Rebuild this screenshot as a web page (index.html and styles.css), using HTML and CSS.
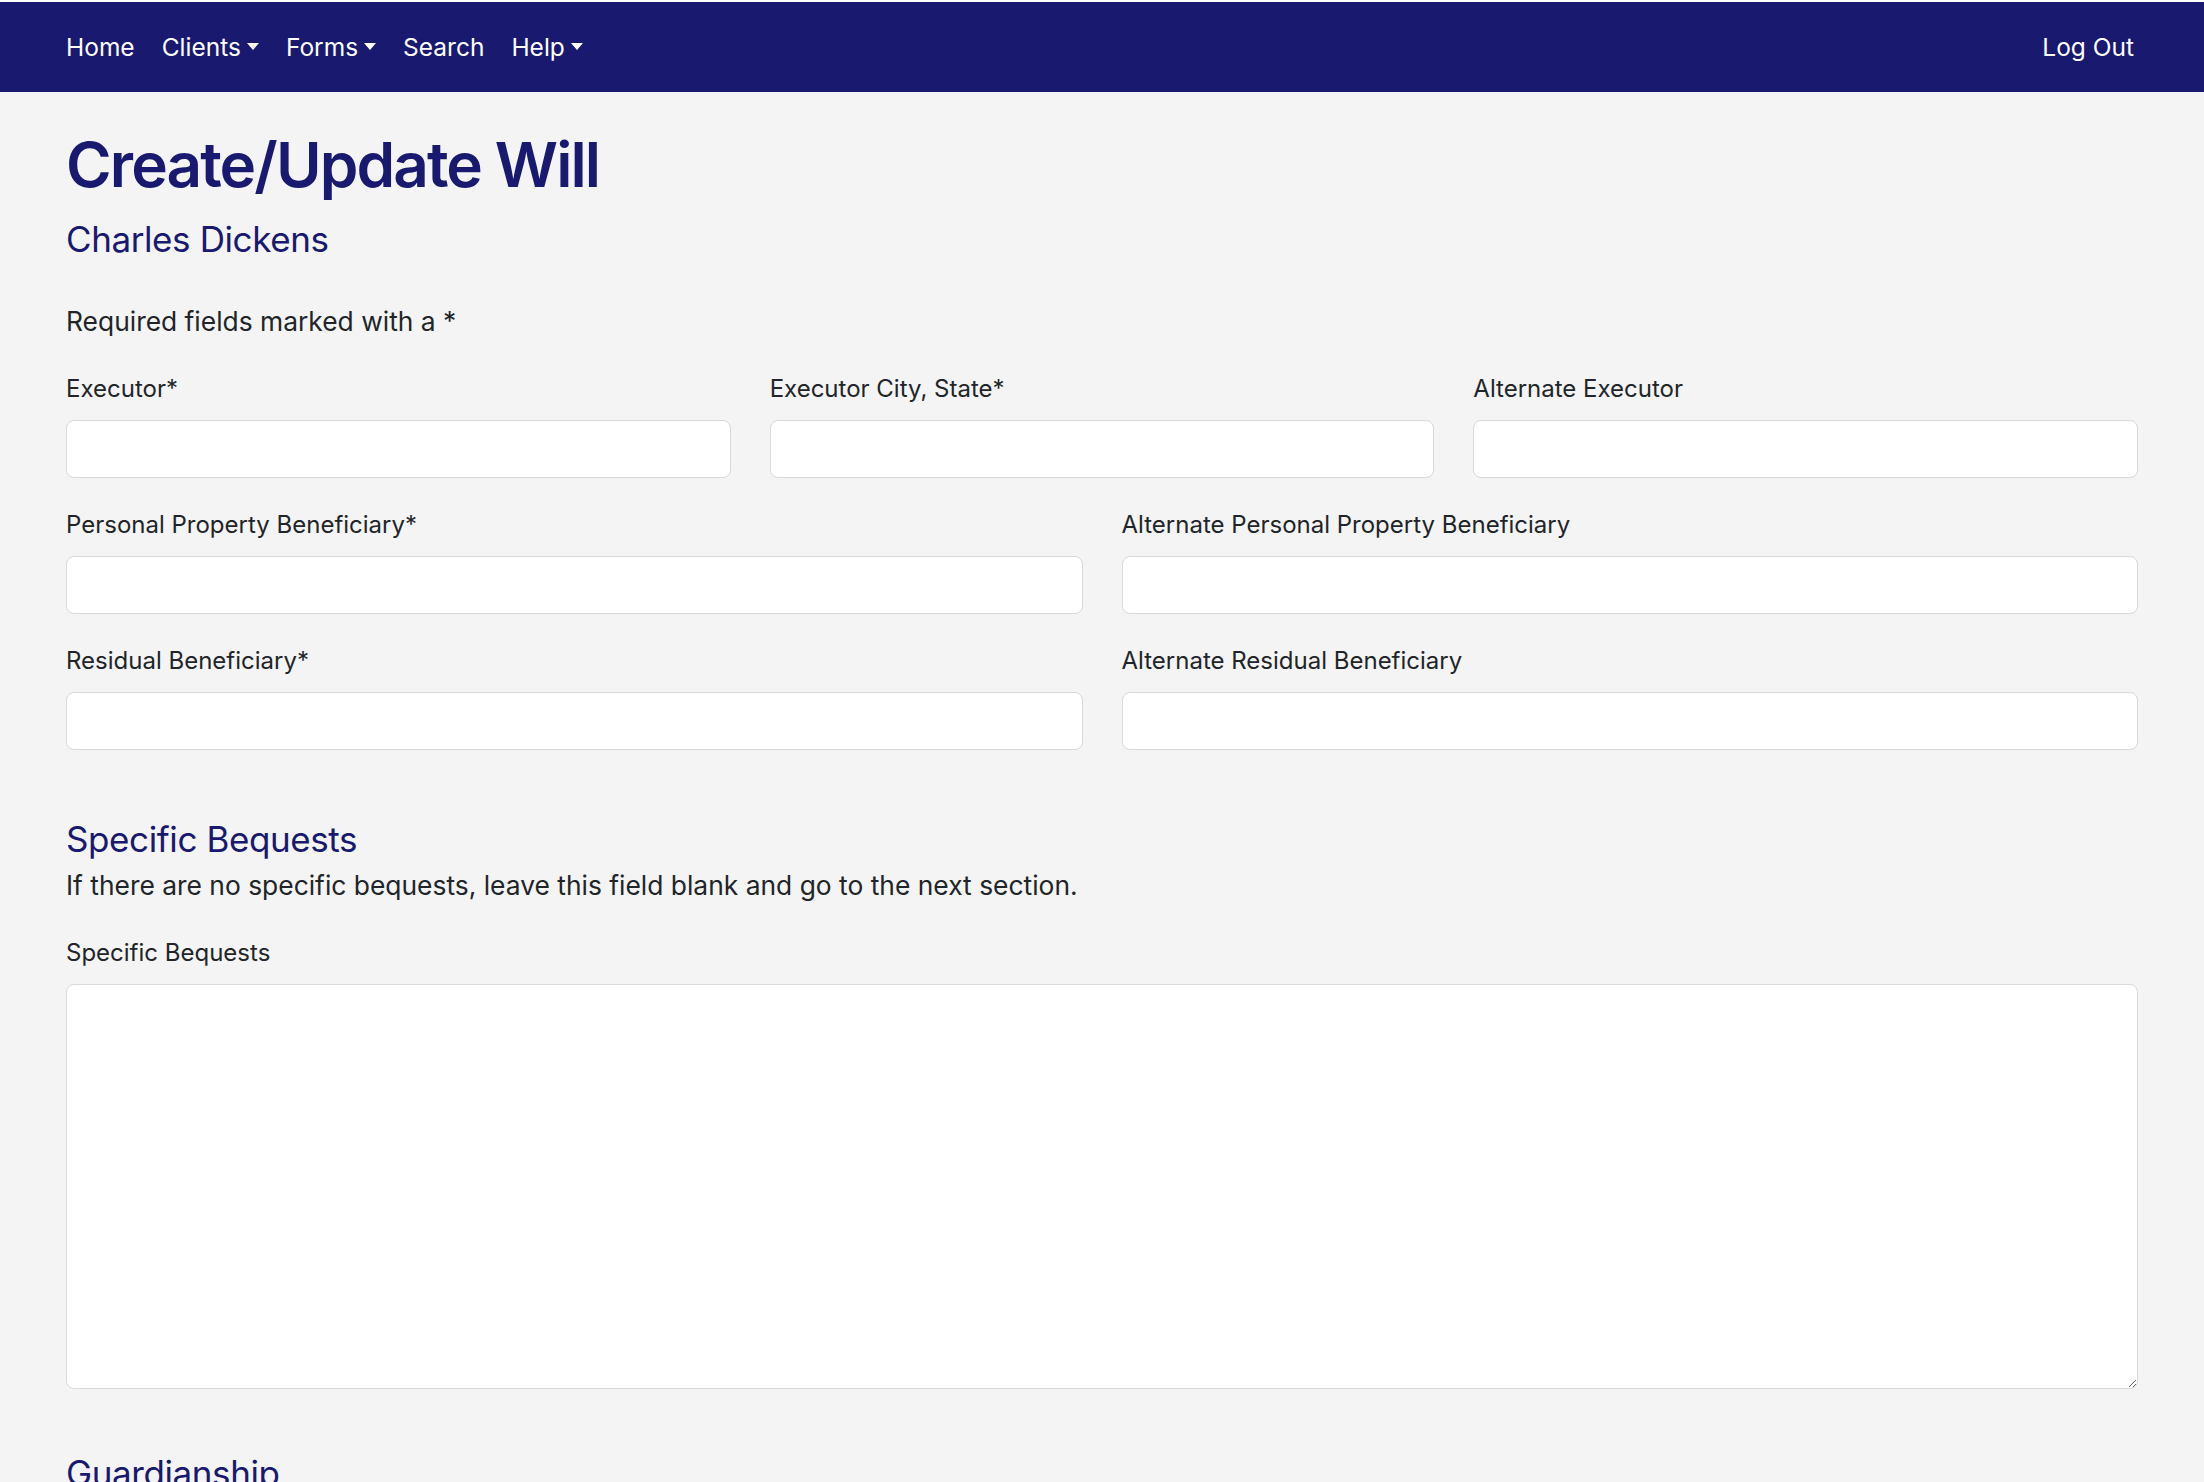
FILE: index.html
```html
<!DOCTYPE html>
<html lang="en">
<head>
  <meta charset="UTF-8" />
  <meta name="viewport" content="width=device-width, initial-scale=1.0">
  <title>Create/Update Will</title>
  <link rel="stylesheet" href="styles.css">
</head>
<body>
  <nav class="navbar">
    <ul class="nav-links">
      <li><a href="#">Home</a></li>
      <li><a href="#" class="dropdown">Clients</a></li>
      <li><a href="#" class="dropdown">Forms</a></li>
      <li><a href="#">Search</a></li>
      <li><a href="#" class="dropdown">Help</a></li>
    </ul>
    <a href="#" class="logout">Log Out</a>
  </nav>

  <main class="page">
    <h1>Create/Update Will</h1>
    <h2 class="client-name">Charles Dickens</h2>

    <p class="required-note">Required fields marked with a *</p>

    <form>
      <div class="row row-3">
        <div class="field">
          <label for="executor">Executor*</label>
          <input type="text" id="executor" />
        </div>
        <div class="field">
          <label for="executorCity">Executor City, State*</label>
          <input type="text" id="executorCity" />
        </div>
        <div class="field">
          <label for="altExecutor">Alternate Executor</label>
          <input type="text" id="altExecutor" />
        </div>
      </div>

      <div class="row row-2">
        <div class="field">
          <label for="ppBeneficiary">Personal Property Beneficiary*</label>
          <input type="text" id="ppBeneficiary" />
        </div>
        <div class="field">
          <label for="altPpBeneficiary">Alternate Personal Property Beneficiary</label>
          <input type="text" id="altPpBeneficiary" />
        </div>
      </div>

      <div class="row row-2">
        <div class="field">
          <label for="resBeneficiary">Residual Beneficiary*</label>
          <input type="text" id="resBeneficiary" />
        </div>
        <div class="field">
          <label for="altResBeneficiary">Alternate Residual Beneficiary</label>
          <input type="text" id="altResBeneficiary" />
        </div>
      </div>

      <section class="section">
        <h2>Specific Bequests</h2>
        <p class="hint">If there are no specific bequests, leave this field blank and go to the next section.</p>
        <div class="field">
          <label for="bequests">Specific Bequests</label>
          <textarea id="bequests"></textarea>
        </div>
      </section>

      <section class="section">
        <h2>Guardianship</h2>
      </section>
    </form>
  </main>
</body>
</html>
```

FILE: styles.css
```css
body {
  margin: 0;
  font-family: Inter, "Noto Sans", sans-serif;
  background-color: #f4f4f4;
  color: #212529;
  border-top: 2px solid #fff;
}
.navbar {
  display: flex;
  align-items: center;
  justify-content: space-between;
  height: 90px;
  padding: 0 70px 0 66px;
  background-color: #191970;
}
.nav-links {
  display: flex;
  gap: 27px;
  list-style: none;
  margin: 0;
  padding: 0;
}
.navbar a {
  color: #fff;
  text-decoration: none;
  font-size: 24.5px;
}
.dropdown::after {
  content: "";
  display: inline-block;
  margin-left: 6px;
  vertical-align: 6px;
  border-top: 7px solid #fff;
  border-left: 6.5px solid transparent;
  border-right: 6.5px solid transparent;
}
.page {
  padding: 36px 66px 0;
}
h1 {
  margin: 0;
  font-size: 62px;
  font-weight: 600;
  line-height: 1.2;
  color: #191970;
  letter-spacing: -1.9px;
}
h2 {
  margin: 0;
  font-size: 35px;
  font-weight: 400;
  line-height: 1.2;
  color: #191970;
  letter-spacing: -0.4px;
}
.client-name {
  margin-top: 16px;
}
p {
  font-size: 26.4px;
  line-height: 1.5;
  margin: 0;
}
.required-note {
  margin-top: 42px;
  margin-bottom: 29px;
}
.row {
  display: grid;
  gap: 39px;
  margin-bottom: 29px;
}
.row-3 {
  grid-template-columns: repeat(3, 1fr);
}
.row-2 {
  grid-template-columns: repeat(2, 1fr);
}
label {
  display: block;
  font-size: 24px;
  line-height: 1.5;
  margin-bottom: 13px;
}
input[type="text"], textarea {
  display: block;
  width: 100%;
  box-sizing: border-box;
  height: 58px;
  padding: 8px 18px;
  font-family: inherit;
  font-size: 24px;
  background-color: #fff;
  border: 1.5px solid #d9d9d9;
  border-radius: 8px;
}
textarea {
  height: 405px;
  resize: vertical;
}
.section {
  margin-top: 68px;
}
.section + .section {
  margin-top: 63px;
}
.hint {
  margin-top: 6px;
  margin-bottom: 29px;
}
```
